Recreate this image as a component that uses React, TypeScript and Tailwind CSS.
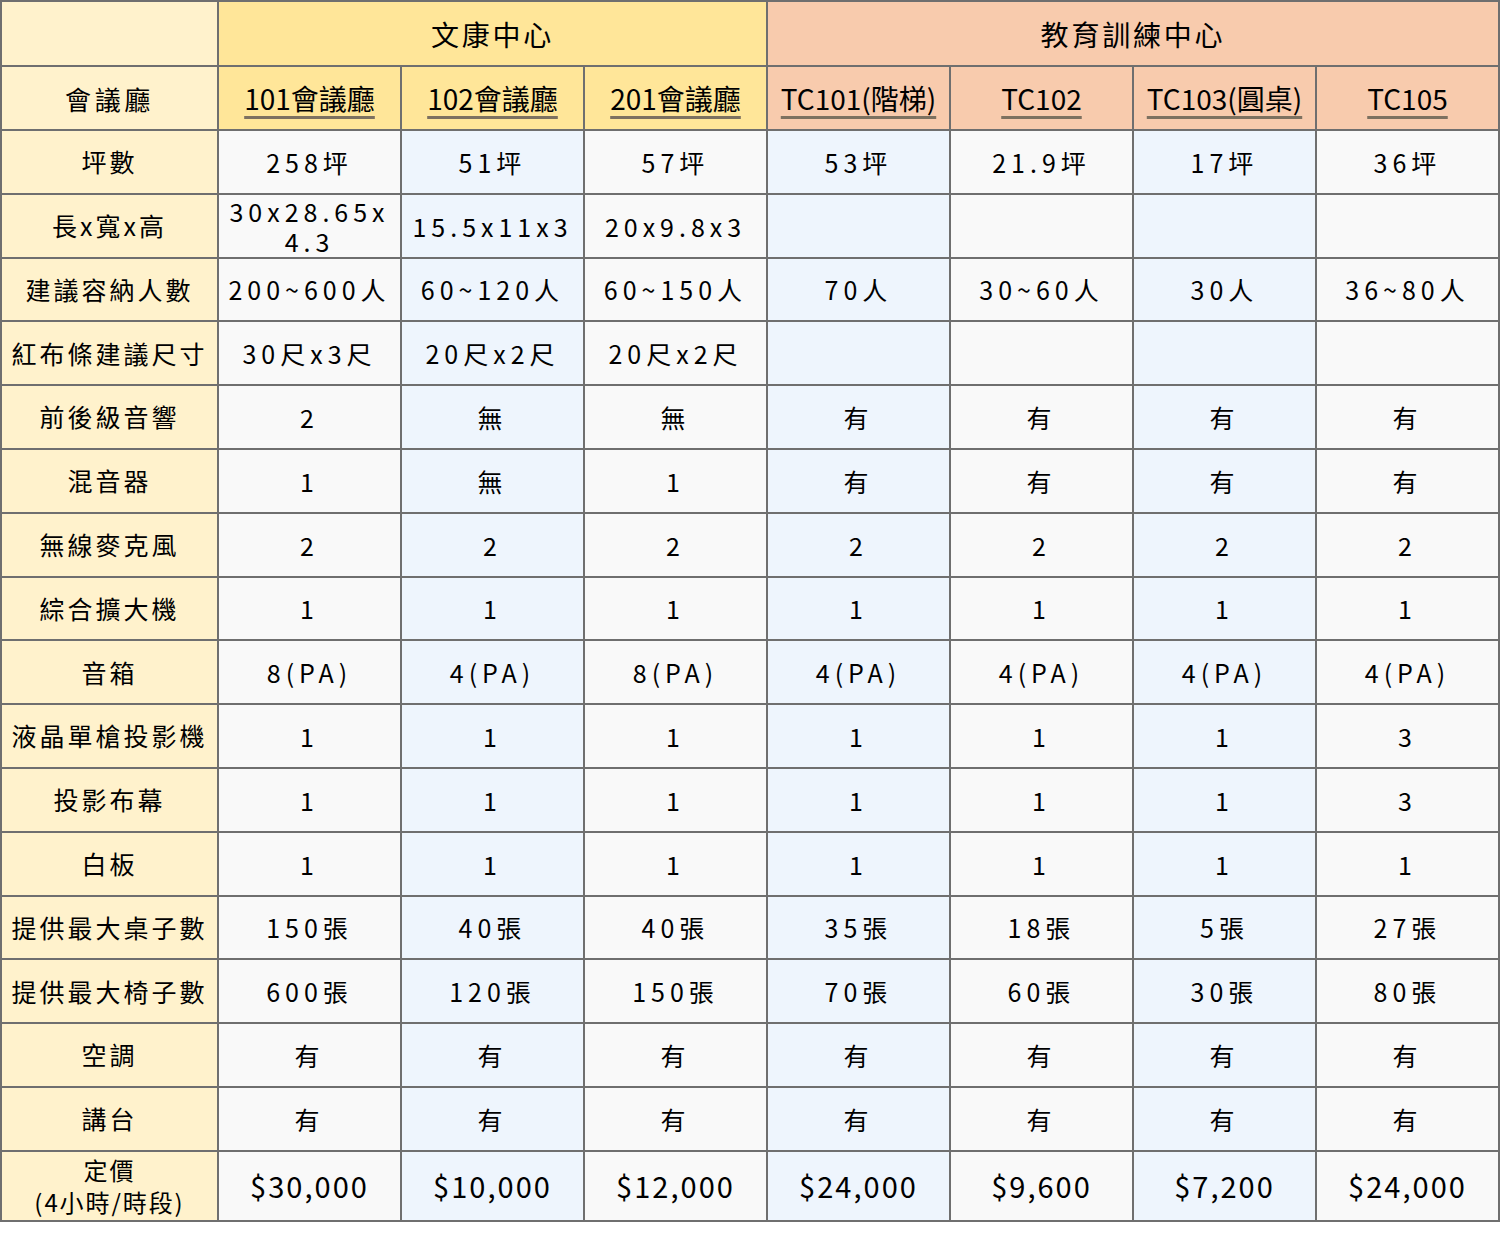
const rooms = [
  "101會議廳",
  "102會議廳",
  "201會議廳",
  "TC101(階梯)",
  "TC102",
  "TC103(圓桌)",
  "TC105",
];

const rows: { label: string; values: string[] }[] = [
  { label: "坪數", values: ["258坪", "51坪", "57坪", "53坪", "21.9坪", "17坪", "36坪"] },
  { label: "長x寬x高", values: ["30x28.65x 4.3", "15.5x11x3", "20x9.8x3", "", "", "", ""] },
  { label: "建議容納人數", values: ["200~600人", "60~120人", "60~150人", "70人", "30~60人", "30人", "36~80人"] },
  { label: "紅布條建議尺寸", values: ["30尺x3尺", "20尺x2尺", "20尺x2尺", "", "", "", ""] },
  { label: "前後級音響", values: ["2", "無", "無", "有", "有", "有", "有"] },
  { label: "混音器", values: ["1", "無", "1", "有", "有", "有", "有"] },
  { label: "無線麥克風", values: ["2", "2", "2", "2", "2", "2", "2"] },
  { label: "綜合擴大機", values: ["1", "1", "1", "1", "1", "1", "1"] },
  { label: "音箱", values: ["8(PA)", "4(PA)", "8(PA)", "4(PA)", "4(PA)", "4(PA)", "4(PA)"] },
  { label: "液晶單槍投影機", values: ["1", "1", "1", "1", "1", "1", "3"] },
  { label: "投影布幕", values: ["1", "1", "1", "1", "1", "1", "3"] },
  { label: "白板", values: ["1", "1", "1", "1", "1", "1", "1"] },
  { label: "提供最大桌子數", values: ["150張", "40張", "40張", "35張", "18張", "5張", "27張"] },
  { label: "提供最大椅子數", values: ["600張", "120張", "150張", "70張", "60張", "30張", "80張"] },
  { label: "空調", values: ["有", "有", "有", "有", "有", "有", "有"] },
  { label: "講台", values: ["有", "有", "有", "有", "有", "有", "有"] },
];

const prices = ["$30,000", "$10,000", "$12,000", "$24,000", "$9,600", "$7,200", "$24,000"];

const cellBg = (i: number) => (i % 2 === 0 ? "bg-[#f9f9f9]" : "bg-[#eef5fd]");

export default function App() {
  return (
    <div
      className="w-[1500px] h-[1233px] bg-white text-black"
      style={{ fontFamily: '"Noto Sans CJK TC", "Noto Sans", sans-serif' }}
    >
      <table className="table-fixed border-collapse w-[1499px]">
        <colgroup>
          <col className="w-[217px]" />
          {rooms.map((r) => (
            <col key={r} className="w-[183px]" />
          ))}
        </colgroup>
        <thead>
          <tr className="h-[65px]">
            <th className="border-2 border-[#6f6f6f] bg-[#fff2cc] p-0" />
            <th
              colSpan={3}
              className="border-2 border-[#6f6f6f] bg-[#ffe699] p-0 text-[28px] font-normal tracking-[0.1em]"
            >
              文康中心
            </th>
            <th
              colSpan={4}
              className="border-2 border-[#6f6f6f] bg-[#f8cbad] p-0 text-[28px] font-normal tracking-[0.1em]"
            >
              教育訓練中心
            </th>
          </tr>
          <tr className="h-[64px]">
            <th className="border-2 border-[#6f6f6f] bg-[#fff2cc] p-0 text-[26px] font-normal tracking-[0.14em]">
              會議廳
            </th>
            {rooms.map((r, i) => (
              <th
                key={r}
                className={`border-2 border-[#6f6f6f] ${i < 3 ? "bg-[#ffe699]" : "bg-[#f8cbad]"} p-0 text-[28px] leading-[34px] font-normal whitespace-nowrap`}
              >
                <span className="underline decoration-[3px] underline-offset-[6px] decoration-[#7d7160]">
                  {r}
                </span>
              </th>
            ))}
          </tr>
        </thead>
        <tbody>
          {rows.map((row) => (
            <tr key={row.label} className="h-[63.8px]">
              <td className="border-2 border-[#6f6f6f] bg-[#fff2cc] p-0 text-center text-[25px] tracking-[0.12em] whitespace-nowrap">
                {row.label}
              </td>
              {row.values.map((v, i) => (
                <td
                  key={i}
                  className={`border-2 border-[#6f6f6f] ${cellBg(i)} p-0 text-center text-[25px] leading-[30px] tracking-[0.2em]`}
                >
                  {v}
                </td>
              ))}
            </tr>
          ))}
          <tr className="h-[70px]">
            <td className="border-2 border-[#6f6f6f] bg-[#fff2cc] p-0 text-center text-[24px] leading-[32px] tracking-[0.08em]">
              <div>定價</div>
              <div>(4小時/時段)</div>
            </td>
            {prices.map((p, i) => (
              <td
                key={i}
                className={`border-2 border-[#6f6f6f] ${cellBg(i)} p-0 text-center text-[29px] tracking-[0.07em]`}
              >
                {p}
              </td>
            ))}
          </tr>
        </tbody>
      </table>
    </div>
  );
}
